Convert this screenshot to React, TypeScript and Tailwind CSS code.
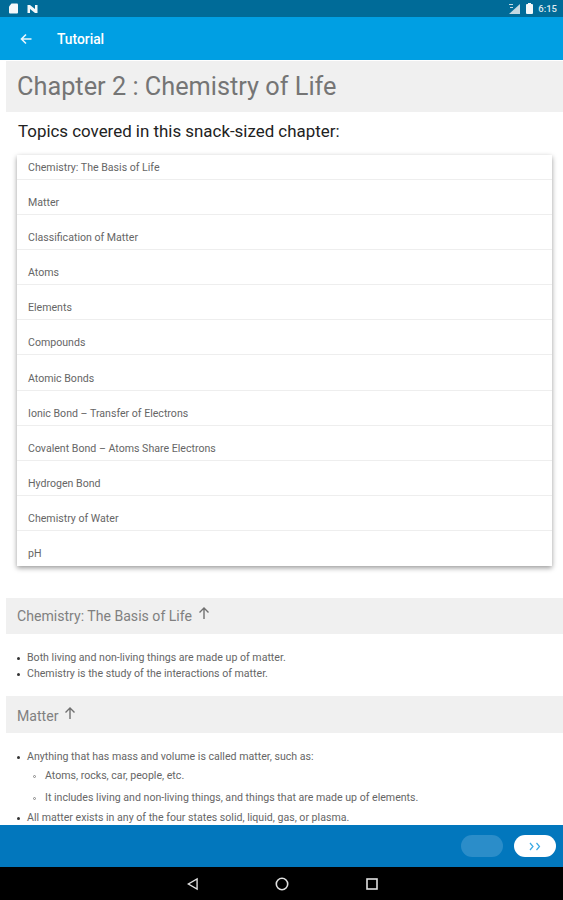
import React from "react";

const topics = [
  "Chemistry: The Basis of Life",
  "Matter",
  "Classification of Matter",
  "Atoms",
  "Elements",
  "Compounds",
  "Atomic Bonds",
  "Ionic Bond – Transfer of Electrons",
  "Covalent Bond – Atoms Share Electrons",
  "Hydrogen Bond",
  "Chemistry of Water",
  "pH",
];

function UpArrow({ className }: { className: string }) {
  return (
    <svg viewBox="0 0 12 14" className={className} fill="none" stroke="#707070" strokeWidth="1.4">
      <path d="M6 13V2M1.5 6.5 6 2l4.5 4.5" />
    </svg>
  );
}

function SectionHeader({ title, h }: { title: string; h: string }) {
  return (
    <div className={`ml-1.5 flex items-center bg-[#f0f0f0] pl-[11px] text-[14.1px] text-[#808080] ${h}`}>
      <span>{title}</span>
      <UpArrow className="ml-[6px] mb-2 h-[14px] w-[12px]" />
    </div>
  );
}

export default function App() {
  return (
    <div className="flex h-[900px] w-[563px] flex-col overflow-hidden bg-white font-['Roboto',sans-serif]">
      <div className="flex h-[17px] shrink-0 items-center justify-between bg-[#006b98] pl-[9px] pr-[6px]">
        <div className="flex items-center gap-[9px]">
          <svg viewBox="0 0 9 10" className="h-[11px] w-[9px]" fill="#f4f8fa">
            <path d="M2.5 0H8a1 1 0 0 1 1 1v8a1 1 0 0 1-1 1H1a1 1 0 0 1-1-1V3z" />
          </svg>
          <svg viewBox="0 0 10 8" className="h-2 w-[11px]" fill="#f4f8fa">
            <path d="M0 0h2.500L7.500 4V0H10v8H7.500L2.500 4v4H0z" />
          </svg>
        </div>
        <div className="flex items-center gap-[5px]">
          <svg viewBox="0 0 11 10" className="h-[10px] w-[13px]">
            <path d="M11 0v10H0z" fill="#c3d8e2" />
            <path d="M0 0h4v1H0zM1 3h3v1H1z" fill="#c3d8e2" />
          </svg>
          <svg viewBox="0 0 7 11" className="h-[11px] w-[7px]" fill="#f4f8fa">
            <path d="M2 0h3v1h1a1 1 0 0 1 1 1v8a1 1 0 0 1-1 1H1a1 1 0 0 1-1-1V2a1 1 0 0 1 1-1h1z" />
          </svg>
          <span className="text-[9.500px] font-medium leading-none text-[#dfeaf0]">6:15</span>
        </div>
      </div>

      <div className="flex h-[43px] shrink-0 items-center bg-[#009fe3] pl-5 pt-px text-white">
        <svg viewBox="0 0 12 12" className="h-3 w-3" fill="none" stroke="#e8f6fd" strokeWidth="1.6">
          <path d="M11.500 6H1.500M6 1.500 1.500 6 6 10.500" />
        </svg>
        <span className="ml-[25px] text-[13.800px] font-medium">Tutorial</span>
      </div>

      <div className="min-h-0 flex-1 overflow-hidden">
        <div className="ml-1.5 mt-px flex h-[51px] items-center bg-[#f0f0f0] pl-[11px] text-[25.300px] text-[#757575]">
          Chapter 2 : Chemistry of Life
        </div>

        <p className="ml-[18px] mt-[8px] text-[16.900px] leading-[22px] text-[#222222]">
          Topics covered in this snack-sized chapter:
        </p>

        <ul className="ml-[17px] mt-[13px] w-[535px] bg-white shadow-[0_2px_5px_rgba(0,0,0,0.4)]">
          {topics.map((t, i) => (
            <li
              key={t}
              className={`flex items-center border-[#eeeeee] pl-[11px] text-[10.600px] text-[#666666] ${
                i === 0 ? "h-[25px] border-b pt-[2px]" : i === topics.length - 1 ? "h-[35.100px] pt-[11px]" : "h-[35.100px] border-b pt-[12px]"
              }`}
            >
              {t}
            </li>
          ))}
        </ul>

        <div className="mt-8">
          <SectionHeader title="Chemistry: The Basis of Life" h="h-9 pt-px" />
        </div>

        <ul className="mt-4 ml-[17px] text-[10.600px] leading-4 text-[#666666]">
          <li className="flex items-center gap-[7px]">
            <span className="h-[3px] w-[3px] rounded-full bg-[#333333]" />
            Both living and non-living things are made up of matter.
          </li>
          <li className="flex items-center gap-[7px]">
            <span className="h-[3px] w-[3px] rounded-full bg-[#333333]" />
            Chemistry is the study of the interactions of matter.
          </li>
        </ul>

        <div className="mt-[14px]">
          <SectionHeader title="Matter" h="h-[37px] pt-1" />
        </div>

        <ul className="mt-4 ml-[17px] text-[10.600px] leading-4 text-[#666666]">
          <li className="flex items-center gap-[7px]">
            <span className="h-[3px] w-[3px] rounded-full bg-[#333333]" />
            Anything that has mass and volume is called matter, such as:
          </li>
          <li className="mt-[3px] ml-[16px] flex items-center gap-[9px]">
            <span className="h-[3px] w-[3px] rounded-full border border-[#888888]" />
            Atoms, rocks, car, people, etc.
          </li>
          <li className="mt-[6px] ml-[16px] flex items-center gap-[9px]">
            <span className="h-[3px] w-[3px] rounded-full border border-[#888888]" />
            It includes living and non-living things, and things that are made up of elements.
          </li>
          <li className="mt-[4px] flex items-center gap-[7px]">
            <span className="h-[3px] w-[3px] rounded-full bg-[#333333]" />
            All matter exists in any of the four states solid, liquid, gas, or plasma.
          </li>
        </ul>
      </div>

      <div className="flex h-[42px] shrink-0 items-center justify-end gap-[11px] bg-[#0277bd] pr-[7px]">
        <div className="h-[22px] w-[42px] rounded-full bg-[#2b8dc9]" />
        <div className="flex h-[22px] w-[42px] items-center justify-center rounded-full bg-white">
          <svg viewBox="0 0 12 8" className="h-[9px] w-[12px]" fill="none" stroke="#39a9e4" strokeWidth="1.2">
            <path d="M1 .5 4 4 1 7.500M7.500 .5 10.500 4 7.500 7.500" />
          </svg>
        </div>
      </div>

      <div className="flex h-[33px] shrink-0 items-center justify-center gap-[77px] bg-black pl-[1px]">
        <svg viewBox="0 0 12 14" className="h-[14px] w-[11px]" fill="none" stroke="#e0e0e0" strokeWidth="1.500">
          <path d="M11 1.500v11L1.500 7z" />
        </svg>
        <svg viewBox="0 0 14 14" className="h-[14px] w-[14px]" fill="none" stroke="#e0e0e0" strokeWidth="1.600">
          <circle cx="7" cy="7" r="5.700" />
        </svg>
        <svg viewBox="0 0 12 12" className="h-[12px] w-[12px]" fill="none" stroke="#e0e0e0" strokeWidth="1.600">
          <rect x="1" y="1" width="10" height="10" />
        </svg>
      </div>
    </div>
  );
}
